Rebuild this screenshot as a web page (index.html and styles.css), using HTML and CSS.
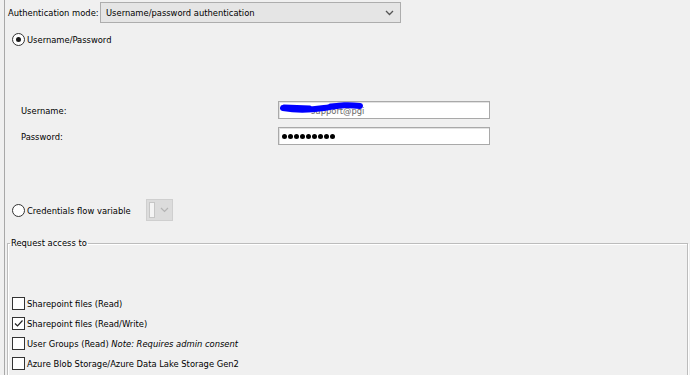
FILE: index.html
```html
<!DOCTYPE html>
<html>
<head>
<meta charset="utf-8">
<link rel="stylesheet" href="styles.css">
</head>
<body>
<div class="panel">
  <div class="mode-row">
    <span class="mode-label">Authentication mode:</span>
    <div class="combo">
      <span class="combo-text">Username/password authentication</span>
      <svg class="chev" width="9" height="6" viewBox="0 0 9 6"><path d="M1 1 L4.5 4.5 L8 1" fill="none" stroke="#555" stroke-width="1.3"/></svg>
    </div>
  </div>

  <label class="radio-row first">
    <span class="radio on"></span>
    <span>Username/Password</span>
  </label>

  <div class="fields">
    <div class="field-row">
      <span class="field-label">Username:</span>
      <div class="input user">
        <span class="user-text">support@pgi</span>
        <svg class="scribble" width="86" height="12" viewBox="0 0 86 12"><path d="M3 6 C 14 8, 30 8, 44 6 S 64 2, 80 4" fill="none" stroke="#0000ff" stroke-width="6" stroke-linecap="round"/><path d="M4 4 L30 5 M50 3 L76 3" fill="none" stroke="#0000ff" stroke-width="3" stroke-linecap="round"/></svg>
      </div>
    </div>
    <div class="field-row pw">
      <span class="field-label">Password:</span>
      <div class="input">
        <span class="dots"><i></i><i></i><i></i><i></i><i></i><i></i><i></i><i></i><i></i></span>
      </div>
    </div>
  </div>

  <div class="radio-row second">
    <span class="radio"></span>
    <span class="cred-text">Credentials flow variable</span>
    <div class="mini-combo">
      <span class="mini-field"></span>
      <svg class="mini-chev" width="9" height="6" viewBox="0 0 9 6"><path d="M1 1 L4.5 4.5 L8 1" fill="none" stroke="#b4b4b4" stroke-width="1.2"/></svg>
    </div>
  </div>

  <fieldset class="group">
    <legend>Request access to</legend>
    <div class="checks">
      <div class="check-row"><span class="box"></span><span>Sharepoint files (Read)</span></div>
      <div class="check-row"><span class="box"><svg width="11" height="11" viewBox="0 0 11 11"><path d="M2 5.5 L4.5 8 L9.5 2.5" fill="none" stroke="#222" stroke-width="1.2"/></svg></span><span>Sharepoint files (Read/Write)</span></div>
      <div class="check-row"><span class="box"></span><span>User Groups (Read) <em>Note: Requires admin consent</em></span></div>
      <div class="check-row"><span class="box"></span><span>Azure Blob Storage/Azure Data Lake Storage Gen2</span></div>
    </div>
  </fieldset>
</div>
</body>
</html>
```

FILE: styles.css
```css
html, body {
  margin: 0;
  padding: 0;
  background: #f0f0f0;
  overflow: hidden;
}
body {
  font-family: "DejaVu Sans Condensed", "DejaVu Sans", sans-serif;
  font-stretch: condensed;
  font-size: 9.3px;
  color: #000;
  width: 690px;
  height: 375px;
}
.panel {
  margin-left: 4px;
  border-left: 1px solid #a8a8a8;
  padding: 2px 0 0 3px;
  height: 373px;
  overflow: hidden;
}
.mode-row {
  display: flex;
  align-items: center;
  height: 21px;
}
.mode-label {
  width: 92px;
}
.combo {
  box-sizing: border-box;
  width: 301px;
  height: 21px;
  border: 1px solid #adadad;
  background: #e5e5e5;
  display: flex;
  align-items: center;
  padding-left: 5px;
  padding-right: 6px;
}
.combo-text {
  flex: 1;
}
.chev {
  display: block;
}
.radio-row {
  display: flex;
  align-items: center;
  padding-left: 4px;
}
.radio-row.first {
  margin-top: 10px;
  height: 13px;
}
.radio {
  box-sizing: border-box;
  width: 13px;
  height: 13px;
  border: 1px solid #333;
  border-radius: 50%;
  background: #fff;
  margin-right: 2px;
  display: flex;
  align-items: center;
  justify-content: center;
}
.radio.on::after {
  content: "";
  width: 5px;
  height: 5px;
  border-radius: 50%;
  background: #1a1a1a;
}
.fields {
  padding-left: 13px;
  margin-top: 55px;
}
.field-row {
  display: flex;
  align-items: center;
  height: 18px;
}
.field-row.pw {
  margin-top: 8px;
}
.field-label {
  width: 257px;
}
.input {
  position: relative;
  box-sizing: border-box;
  width: 212px;
  height: 18px;
  border: 1px solid #a9a9a9;
  box-shadow: inset 1px 1px 0 #e2e2e2;
  background: #fff;
  display: flex;
  align-items: center;
  padding-left: 3px;
}
.user-text {
  color: #666;
  padding-left: 29px;
  padding-top: 1px;
}
.scribble {
  position: absolute;
  left: 1px;
  top: 0;
}
.dots {
  display: flex;
  gap: 1px;
}
.dots i {
  width: 5px;
  height: 5px;
  border-radius: 50%;
  background: #000;
}
.radio-row.second {
  margin-top: 54px;
  height: 22px;
}
.cred-text {
  width: 119px;
}
.mini-combo {
  box-sizing: border-box;
  width: 27px;
  height: 22px;
  border: 1px solid #cfcfcf;
  background: #dcdcdc;
  display: flex;
  align-items: center;
  padding: 2px 3px 2px 2px;
}
.mini-field {
  box-sizing: border-box;
  width: 6px;
  height: 16px;
  border: 1px solid #c6c6c6;
  background: #f4f4f4;
  margin-right: 5px;
}
.group {
  margin: 15px 2px 0 -1px;
  padding: 0 0 4px 4px;
  border: 1px solid #bcbcbc;
  box-shadow: inset 1px 1px 0 #fff, 1px 1px 0 #fff;
  min-width: 0;
}
.group legend {
  padding: 0 1px;
  margin-left: -2px;
  line-height: 14px;
}
.checks {
  padding-top: 43px;
}
.check-row {
  display: flex;
  align-items: center;
  height: 20px;
}
.box {
  box-sizing: border-box;
  width: 13px;
  height: 13px;
  border: 1px solid #333;
  background: #fff;
  margin-right: 2px;
  display: flex;
  align-items: center;
  justify-content: center;
}
.box svg {
  display: block;
}
em {
  font-style: italic;
}
```
